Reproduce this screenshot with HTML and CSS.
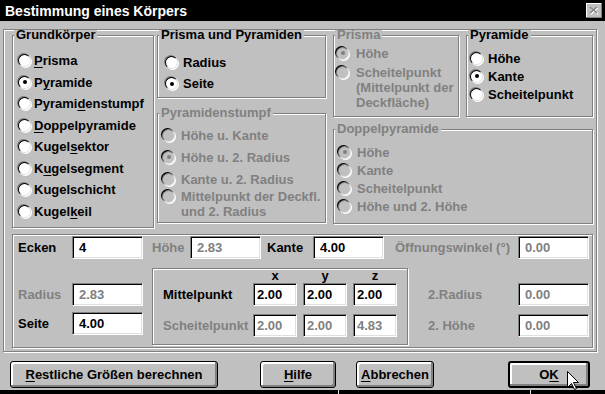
FILE: index.html
```html
<!DOCTYPE html>
<html lang="de">
<head>
  <meta charset="UTF-8" />
  <title>Bestimmung eines Körpers</title>
  <link rel="stylesheet" href="styles.css">
</head>

<body>
  <div class="titlebar">
    <span class="title">Bestimmung eines Körpers</span>
    <span class="close">
      <svg width="10" height="9" viewBox="0 0 10 9">
        <path d="M2 2 L9 8 M9 2 L2 8" stroke="#fff" stroke-width="1.4" />
        <path d="M1 1 L8 7 M8 1 L1 7" stroke="#808080" stroke-width="1.4" />
      </svg>
    </span>
  </div>

  <div class="frame">
    <div class="top">
      <fieldset class="group grund">
        <legend>Grundkörper</legend>
        <div class="opts">
          <div class="opt"><span class="radio"></span><span><u>P</u>risma</span></div>
          <div class="opt"><span class="radio on"></span><span>P<u>y</u>ramide</span></div>
          <div class="opt"><span class="radio"></span><span>Pyrami<u>d</u>enstumpf</span></div>
          <div class="opt"><span class="radio"></span><span><u>D</u>oppelpyramide</span></div>
          <div class="opt"><span class="radio"></span><span>Kugel<u>s</u>ektor</span></div>
          <div class="opt"><span class="radio"></span><span>K<u>u</u>gelsegment</span></div>
          <div class="opt"><span class="radio"></span><span>Kugelschicht</span></div>
          <div class="opt"><span class="radio"></span><span>Kugel<u>k</u>eil</span></div>
        </div>
      </fieldset>

      <div class="col2">
        <fieldset class="group pp">
          <legend>Prisma und Pyramiden</legend>
          <div class="opts">
            <div class="opt"><span class="radio"></span><span>Radius</span></div>
            <div class="opt"><span class="radio on"></span><span>Seite</span></div>
          </div>
        </fieldset>
        <fieldset class="group stumpf off">
          <legend>Pyramidenstumpf</legend>
          <div class="opts">
            <div class="opt"><span class="radio"></span><span>Höhe u. Kante</span></div>
            <div class="opt"><span class="radio on"></span><span>Höhe u. 2. Radius</span></div>
            <div class="opt"><span class="radio"></span><span>Kante u. 2. Radius</span></div>
            <div class="opt multi"><span class="radio"></span><span>Mittelpunkt der Deckfl.<br>und 2. Radius</span></div>
          </div>
        </fieldset>
      </div>

      <div class="col3">
        <div class="row3">
          <fieldset class="group prisma off">
            <legend>Prisma</legend>
            <div class="opts">
              <div class="opt"><span class="radio on"></span><span>Höhe</span></div>
              <div class="opt multi"><span class="radio"></span><span>Scheitelpunkt<br>(Mittelpunkt der<br>Deckfläche)</span></div>
            </div>
          </fieldset>
          <fieldset class="group pyr">
            <legend>Pyramide</legend>
            <div class="opts">
              <div class="opt"><span class="radio"></span><span>Höhe</span></div>
              <div class="opt"><span class="radio on"></span><span>Kante</span></div>
              <div class="opt"><span class="radio"></span><span>Scheitelpunkt</span></div>
            </div>
          </fieldset>
        </div>
        <fieldset class="group doppel off">
          <legend>Doppelpyramide</legend>
          <div class="opts">
            <div class="opt"><span class="radio on"></span><span>Höhe</span></div>
            <div class="opt"><span class="radio"></span><span>Kante</span></div>
            <div class="opt"><span class="radio"></span><span>Scheitelpunkt</span></div>
            <div class="opt"><span class="radio"></span><span>Höhe und 2. Höhe</span></div>
          </div>
        </fieldset>
      </div>
    </div>

    <div class="lower">
      <div class="row1">
        <span class="lbl lbl-ecken">Ecken</span>
        <input class="fld" type="text" value="4" readonly>
        <span class="lbl lbl-hoehe dim">Höhe</span>
        <input class="fld" type="text" value="2.83" disabled>
        <span class="lbl lbl-kante">Kante</span>
        <input class="fld" type="text" value="4.00" readonly>
        <span class="lbl lbl-winkel dim">Öffnungswinkel (°)</span>
        <input class="fld" type="text" value="0.00" disabled>
      </div>

      <div class="row2">
        <div class="left-col">
          <div class="field-row">
            <span class="lbl lbl-ecken dim">Radius</span>
            <input class="fld" type="text" value="2.83" disabled>
          </div>
          <div class="field-row">
            <span class="lbl lbl-ecken">Seite</span>
            <input class="fld" type="text" value="4.00" readonly>
          </div>
        </div>

        <div class="sub-box">
          <div class="xyz-head"><span>x</span><span>y</span><span>z</span></div>
          <div class="coord-row">
            <span class="lbl lbl-coord">Mittelpunkt</span>
            <input class="fld narrow" type="text" value="2.00" readonly>
            <input class="fld narrow" type="text" value="2.00" readonly>
            <input class="fld narrow" type="text" value="2.00" readonly>
          </div>
          <div class="coord-row">
            <span class="lbl lbl-coord dim">Scheitelpunkt</span>
            <input class="fld narrow" type="text" value="2.00" disabled>
            <input class="fld narrow" type="text" value="2.00" disabled>
            <input class="fld narrow" type="text" value="4.83" disabled>
          </div>
        </div>

        <div class="right-col">
          <div class="field-row">
            <span class="lbl lbl-coord dim">2.Radius</span>
            <input class="fld" type="text" value="0.00" disabled>
          </div>
          <div class="field-row">
            <span class="lbl lbl-coord dim">2. Höhe</span>
            <input class="fld" type="text" value="0.00" disabled>
          </div>
        </div>
      </div>
    </div>
  </div>

  <div class="buttons">
    <button class="btn b-calc"><u>R</u>estliche Größen berechnen</button>
    <button class="btn b-help"><u>H</u>ilfe</button>
    <button class="btn b-cancel"><u>A</u>bbrechen</button>
    <button class="btn b-ok">O<u>K</u></button>
  </div>

  <div class="status"><span></span><span></span><span></span></div>

  <!-- mouse pointer over the OK button -->
  <svg class="cursor" width="13" height="20" viewBox="0 0 13 20">
    <path d="M0.5 0.5 V16.5 L4.5 12.5 L7.5 18.5 L9.5 17.5 L6.5 11.5 H11.5 Z" fill="#fff" stroke="#000" />
  </svg>
</body>
</html>
```

FILE: styles.css
```css
* {
  box-sizing: border-box;
}
body {
  margin: 0;
  width: 605px;
  height: 394px;
  overflow: hidden;
  position: relative;
  background: #c0c0c0;
  color: #000;
  font: bold 13px "Liberation Sans", Arial, sans-serif;
}
u {
  text-underline-offset: 2px;
}
.titlebar {
  height: 21px;
  background: #000;
  color: #fff;
  display: flex;
  align-items: center;
  justify-content: space-between;
  padding: 0 3px 0 5px;
}
.titlebar .title {
  font-size: 14px;
}
.close {
  width: 16px;
  height: 15px;
  background: #c0c0c0;
  box-shadow: inset -1px -1px #808080, inset 1px 1px #fff;
  display: flex;
  align-items: center;
  justify-content: center;
}

/* etched frames */
.frame,
.group,
.lower,
.sub-box {
  border: 1px solid #808080;
  box-shadow: inset 1px 1px #fff, 1px 1px #fff;
}
.frame {
  margin: 8px 0 0 3px;
  width: 594px;
  height: 323px;
  padding: 0 0 3px 8px;
}
.top {
  display: flex;
  height: 198px;
}
.group {
  margin: 0;
  padding: 0 0 0 1px;
  min-width: 0;
}
.group legend {
  padding: 0 2px;
  line-height: 10px;
  background: #c0c0c0;
}
.off,
.dim {
  color: #808080;
}
.grund {
  width: 142px;
  height: 198px;
}
.col2 {
  margin-left: 3px;
  width: 169px;
  display: flex;
  flex-direction: column;
}
.pp {
  height: 68px;
}
.stumpf {
  margin-top: 10px;
  height: 115px;
}
.col3 {
  margin-left: 7px;
  width: 260px;
}
.row3 {
  display: flex;
}
.prisma {
  width: 126px;
  height: 87px;
}
.pyr {
  margin-left: 7px;
  width: 127px;
  height: 87px;
}
.doppel {
  margin-top: 7px;
  height: 100px;
}

/* radio options */
.opt {
  display: flex;
  align-items: center;
  white-space: nowrap;
}
.opt.multi {
  align-items: flex-start;
  line-height: 15px;
}
.opt.multi .radio {
  margin-top: 1px;
}
.radio {
  flex: none;
  width: 13px;
  height: 13px;
  border-radius: 50%;
  background: #fff;
  border: 1px solid;
  border-color: #000 #dfdfdf #dfdfdf #000;
  box-shadow: -1px -1px 0 #808080, 1px 1px 0 #fff;
  position: relative;
}
.radio.on::after {
  content: '';
  position: absolute;
  left: 3.5px;
  top: 3.5px;
  width: 4px;
  height: 4px;
  border-radius: 50%;
  background: #000;
}
.off .radio {
  background: #c0c0c0;
  border-color: #808080 #dfdfdf #dfdfdf #808080;
  box-shadow: -1px -1px 0 #000, 1px 1px 0 #fff;
}
.off .radio.on::after {
  background: #808080;
}

.grund .opts { padding: 10px 0 0 4px; }
.grund .opt { height: 21.5px; }
.grund .radio { margin-right: 3px; }

.pp .opts { padding: 12px 0 0 6px; }
.pp .opt { height: 21px; }
.pp .radio { margin-right: 5px; }

.prisma .opts { padding: 3px 0 0 1px; }
.prisma .opt { height: 20px; }
.prisma .opt.multi { height: auto; margin-top: 2px; }
.prisma .radio { margin-right: 7px; }

.pyr .opts { padding: 9px 0 0 2px; }
.pyr .opt { height: 18px; }
.pyr .radio { margin-right: 5px; }

.stumpf .opts { padding: 6px 0 0 3px; }
.stumpf .opt { height: 22px; }
.stumpf .opt.multi { height: auto; margin-top: -1.5px; }
.stumpf .radio { margin-right: 6px; }

.doppel .opts { padding: 9px 0 0 3px; }
.doppel .opt { height: 18px; }
.doppel .radio { margin-right: 6px; }

/* lower part with edit fields */
.lower {
  margin-top: 6px;
  width: 581px;
  height: 114px;
  padding: 1px 0 0 5px;
}
.row1 {
  display: flex;
  align-items: center;
  height: 23px;
}
.lbl {
  flex: none;
  white-space: nowrap;
}
.lbl-ecken { width: 54px; }
.lbl-hoehe { width: 38px; margin-left: 9px; }
.lbl-kante { width: 46px; margin-left: 6px; }
.lbl-winkel { width: 123px; margin-left: 11px; }
.lbl-coord { width: 90px; }

.fld {
  flex: none;
  width: 71px;
  height: 23px;
  margin: 0;
  padding: 0 0 0 6px;
  border: 1px solid;
  border-color: #808080 #fff #fff #808080;
  box-shadow: inset 1px 1px #000, inset -1px -1px #dfdfdf;
  background: #fff;
  color: #000;
  font: inherit;
  outline: none;
}
.fld:disabled {
  background: #fff;
  color: #808080;
}
.fld.narrow {
  width: 44px;
  padding-left: 3px;
  margin-right: 6px;
}

.row2 {
  display: flex;
}
.left-col {
  width: 125px;
  padding-top: 24px;
  display: flex;
  flex-direction: column;
  gap: 6px;
}
.field-row {
  display: flex;
  align-items: center;
  height: 23px;
}
.sub-box {
  margin: 9px 0 0 9px;
  width: 256px;
  height: 77px;
  padding-left: 10px;
}
.xyz-head {
  display: flex;
  height: 14px;
  padding-left: 90px;
  line-height: 14px;
}
.xyz-head span {
  width: 44px;
  margin-right: 6px;
  text-align: center;
}
.coord-row {
  display: flex;
  align-items: center;
  height: 23px;
}
.coord-row + .coord-row {
  margin-top: 8px;
}
.right-col {
  margin-left: 20px;
  padding-top: 24px;
  display: flex;
  flex-direction: column;
  gap: 8px;
}

/* buttons */
.buttons {
  display: flex;
  margin-top: 9px;
  padding-left: 10px;
  height: 27px;
}
.btn {
  height: 27px;
  padding: 0;
  border: 1px solid #000;
  border-radius: 3px;
  background: #c0c0c0;
  box-shadow: inset -2px -2px #808080, inset 2px 2px #fff;
  color: #000;
  font: inherit;
}
.b-calc { width: 208px; }
.b-help { width: 76px; margin-left: 42px; }
.b-cancel { width: 78px; margin-left: 20px; }
.b-ok {
  width: 82px;
  margin-left: 74px;
  border-width: 2px;
}

.status {
  margin-top: 2px;
  height: 4px;
  display: flex;
  gap: 1px;
  background: #dfdfdf;
}
.status span {
  background: #000;
}
.status span:nth-child(1) { width: 338px; }
.status span:nth-child(2) { width: 191px; }
.status span:nth-child(3) { flex: 1; }

.cursor {
  position: absolute;
  left: 567px;
  top: 371px;
}
```
